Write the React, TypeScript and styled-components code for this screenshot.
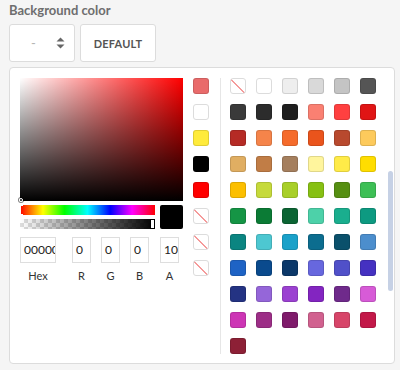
import React from 'react';
import styled, { createGlobalStyle } from 'styled-components';

const GlobalStyle = createGlobalStyle`
  html, body {
    margin: 0;
    padding: 0;
    background: #f5f5f5;
    font-family: Lato, "Open Sans", sans-serif;
  }
`;

const Page = styled.div`
  width: 400px;
  height: 370px;
  box-sizing: border-box;
  padding: 3px 5px 0 9px;
`;

const Title = styled.div`
  font-size: 13px;
  font-weight: 700;
  color: #6e6e6e;
  height: 21px;
  line-height: 15px;
`;

const Toolbar = styled.div`
  display: flex;
  gap: 5px;
  margin-bottom: 5px;
`;

const Box = styled.div<{ $w: number }>`
  width: ${(p) => p.$w}px;
  height: 38px;
  box-sizing: border-box;
  border: 1px solid #dcdcdc;
  border-radius: 3px;
  background: #fff;
  display: flex;
  align-items: center;
  justify-content: center;
`;

const NumberBox = styled(Box)`
  justify-content: flex-start;
  padding-left: 21px;
`;

const Dash = styled.span`
  color: #b5b5b5;
  font-size: 13px;
  margin-right: 20px;
`;

const Spinner = styled.svg`
  width: 9px;
  height: 12px;
`;

const DefaultLabel = styled.span`
  font-size: 11px;
  font-weight: 700;
  color: #555;
  letter-spacing: 0.2px;
`;

const Panel = styled.div`
  width: 386px;
  height: 297px;
  box-sizing: border-box;
  border: 1px solid #dcdcdc;
  border-radius: 4px;
  background: #fff;
  padding: 10px 0 0 10px;
  display: flex;
  position: relative;
`;

const Picker = styled.div`
  width: 163px;
  display: flex;
  flex-direction: column;
`;

const Saturation = styled.div`
  height: 123px;
  position: relative;
  background: linear-gradient(to top, #000, rgba(0, 0, 0, 0)),
    linear-gradient(to right, #fff, rgba(255, 255, 255, 0)), #ff0000;
`;

const SatCursor = styled.div`
  position: absolute;
  left: -1px;
  bottom: -1px;
  width: 2px;
  height: 2px;
  border: 1px solid #fff;
  border-radius: 50%;
  box-shadow: 0 0 0 1px rgba(0, 0, 0, 0.5);
`;

const SliderRow = styled.div`
  display: flex;
  gap: 5px;
  margin-top: 4px;
`;

const Sliders = styled.div`
  flex: 1;
  display: flex;
  flex-direction: column;
  gap: 4px;
`;

const Hue = styled.div`
  height: 10px;
  position: relative;
  background: linear-gradient(to right, #f00 0%, #ff0 17%, #0f0 33%, #0ff 50%, #00f 67%, #f0f 83%, #f00 100%);
`;

const HueCursor = styled.div`
  position: absolute;
  left: 0;
  top: 0;
  width: 2px;
  height: 8px;
  border: 1px solid #fff;
  border-right: none;
`;

const Alpha = styled.div`
  height: 10px;
  position: relative;
  background: linear-gradient(to right, rgba(0, 0, 0, 0), #000),
    repeating-conic-gradient(#ddd 0% 25%, #fff 0% 50%) 0 0 / 8px 8px;
`;

const AlphaCursor = styled.div`
  position: absolute;
  right: 0;
  top: 0;
  width: 3px;
  height: 8px;
  background: #fff;
  border: 1px solid #000;
`;

const Preview = styled.div`
  width: 23px;
  height: 24px;
  background: #000;
  border-radius: 2px;
`;

const Fields = styled.div`
  display: flex;
  margin-top: 8px;
`;

const Field = styled.div<{ $w: number; $ml: number }>`
  width: ${(p) => p.$w}px;
  margin-left: ${(p) => p.$ml}px;
  display: flex;
  flex-direction: column;
  align-items: center;
`;

const FieldInput = styled.div`
  width: 100%;
  height: 26px;
  box-sizing: border-box;
  border: 1px solid #dedede;
  padding: 0 3px;
  font-size: 12px;
  line-height: 24px;
  color: #222;
  overflow: hidden;
  white-space: nowrap;
`;

const FieldLabel = styled.div`
  font-size: 11px;
  color: #333;
  margin-top: 6px;
`;

const Presets = styled.div`
  margin-left: 10px;
  display: flex;
  flex-direction: column;
  gap: 10px;
`;

const Swatch = styled.div<{ $c: string }>`
  width: 16px;
  height: 16px;
  box-sizing: border-box;
  border-radius: 3px;
  background: ${(p) => p.$c};
  border: 1px solid ${(p) => (p.$c === '#ffffff' ? '#dcdcdc' : 'rgba(0,0,0,0.12)')};
`;

const NoneSwatch = styled.div`
  width: 16px;
  height: 16px;
  box-sizing: border-box;
  border-radius: 3px;
  border: 1px solid #dcdcdc;
  background: linear-gradient(
    to top right,
    transparent calc(50% - 1px),
    #f59a9a calc(50% - 1px),
    #f59a9a calc(50% + 0.5px),
    transparent calc(50% + 0.5px)
  );
`;

const Divider = styled.div`
  width: 1px;
  height: 276px;
  background: #e6e6e6;
  margin-left: 11px;
`;

const GridArea = styled.div`
  margin-left: 9px;
  height: 286px;
  overflow: hidden;
`;

const Grid = styled.div`
  display: grid;
  grid-template-columns: repeat(6, 16px);
  grid-auto-rows: 16px;
  gap: 10px;
`;

const ScrollThumb = styled.div`
  position: absolute;
  right: 1px;
  top: 103px;
  width: 5px;
  height: 120px;
  border-radius: 3px;
  background: #c6d1e5;
`;

const presets = ['#e96b6b', '#ffffff', '#ffeb3b', '#000000', '#ff0000', null, null, null];

const palette: (string | null)[] = [
  null, '#ffffff', '#eeeeee', '#d9d9d9', '#c4c4c4', '#555555',
  '#3a3a3a', '#2c2c2c', '#1e1e1e', '#fa8072', '#ff4040', '#e01515',
  '#b52b25', '#f5844a', '#f56b2b', '#ea541c', '#b8492e', '#fdca5c',
  '#e0ae62', '#c17d46', '#a57f5e', '#fff59d', '#ffeb48', '#ffdd00',
  '#fcbf00', '#c6da3b', '#a8cf28', '#87c013', '#568f12', '#3dbf55',
  '#159545', '#0b7b35', '#0b6433', '#4dd1a9', '#1aae8e', '#0d9a81',
  '#0b8581', '#4dc7d1', '#1aa1c9', '#0c6d8f', '#0a506b', '#4c8ecd',
  '#1e63c5', '#0a4a8d', '#0b3869', '#6767de', '#5050c9', '#4531c1',
  '#243383', '#9566d9', '#9b41d1', '#8325c1', '#6f2a8b', '#d75bd7',
  '#cd35b5', '#9d2e87', '#7f1b6b', '#d1618f', '#d74569', '#c31949',
  '#8d2036',
];

const fields = [
  { label: 'Hex', value: '000000', w: 36, ml: 0 },
  { label: 'R', value: '0', w: 19, ml: 16 },
  { label: 'G', value: '0', w: 19, ml: 10 },
  { label: 'B', value: '0', w: 19, ml: 10 },
  { label: 'A', value: '100', w: 19, ml: 11 },
];

function App() {
  return (
    <Page>
      <GlobalStyle />
      <Title>Background color</Title>
      <Toolbar>
        <NumberBox $w={66}>
          <Dash>-</Dash>
          <Spinner viewBox="0 0 9 12">
            <path d="M4.5 0.5 L8.5 4.5 L0.5 4.5 Z" fill="#666" />
            <path d="M4.5 11.5 L8.5 7.5 L0.5 7.5 Z" fill="#666" />
          </Spinner>
        </NumberBox>
        <Box $w={76}>
          <DefaultLabel>DEFAULT</DefaultLabel>
        </Box>
      </Toolbar>
      <Panel>
        <Picker>
          <Saturation>
            <SatCursor />
          </Saturation>
          <SliderRow>
            <Sliders>
              <Hue>
                <HueCursor />
              </Hue>
              <Alpha>
                <AlphaCursor />
              </Alpha>
            </Sliders>
            <Preview />
          </SliderRow>
          <Fields>
            {fields.map((f) => (
              <Field key={f.label} $w={f.w} $ml={f.ml}>
                <FieldInput>{f.value}</FieldInput>
                <FieldLabel>{f.label}</FieldLabel>
              </Field>
            ))}
          </Fields>
        </Picker>
        <Presets>
          {presets.map((c, i) => (c ? <Swatch key={i} $c={c} /> : <NoneSwatch key={i} />))}
        </Presets>
        <Divider />
        <GridArea>
          <Grid>
            {palette.map((c, i) => (c ? <Swatch key={i} $c={c} /> : <NoneSwatch key={i} />))}
          </Grid>
        </GridArea>
        <ScrollThumb />
      </Panel>
    </Page>
  );
}

export default App;
